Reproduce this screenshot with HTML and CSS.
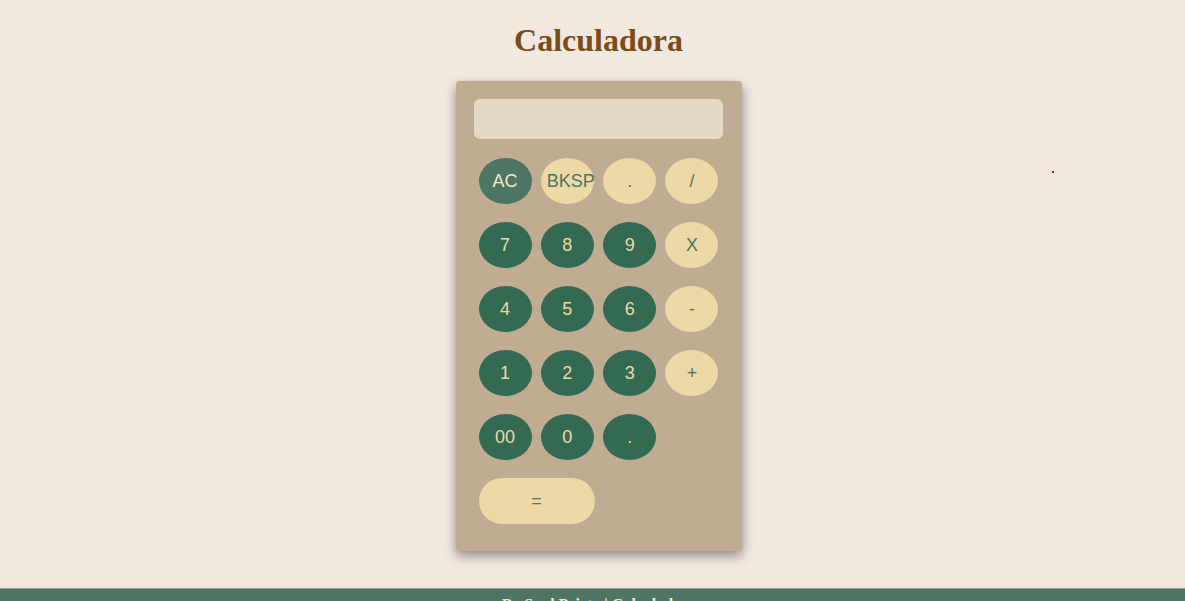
FILE: index.html
```html
<!DOCTYPE html>
<html lang="es">
<head>
<meta charset="utf-8">
<title>Calculadora</title>
<link rel="stylesheet" href="styles.css">
</head>
<body>
<main class="page">
  <h1 class="title">Calculadora</h1>
  <div class="calculator">
    <div class="display"></div>
    <div class="keys">
      <button class="key key-ac">AC</button>
      <button class="key key-op">BKSP</button>
      <button class="key key-op">.</button>
      <button class="key key-op">/</button>
      <button class="key key-num">7</button>
      <button class="key key-num">8</button>
      <button class="key key-num">9</button>
      <button class="key key-op">X</button>
      <button class="key key-num">4</button>
      <button class="key key-num">5</button>
      <button class="key key-num">6</button>
      <button class="key key-op">-</button>
      <button class="key key-num">1</button>
      <button class="key key-num">2</button>
      <button class="key key-num">3</button>
      <button class="key key-op">+</button>
      <button class="key key-num">00</button>
      <button class="key key-num">0</button>
      <button class="key key-num">.</button>
      <span class="key-empty"></span>
      <button class="key key-op key-wide">=</button>
    </div>
  </div>
  <span class="dot"></span>
</main>
<footer class="footer">By Saul Prieto | Calculadora</footer>
</body>
</html>
```

FILE: styles.css
```css
html, body {
  margin: 0;
  padding: 0;
}
body {
  background: #f1e8df;
  font-family: "Liberation Serif", "Times New Roman", serif;
  overflow: hidden;
}
.page {
  position: relative;
  padding: 0.5px 0 0 12px;
  display: flex;
  flex-direction: column;
  align-items: center;
}
.title {
  margin: 21px 0 22px;
  font-size: 32px;
  font-weight: bold;
  color: #7b4b1a;
  line-height: 37px;
}
.calculator {
  width: 286px;
  box-sizing: border-box;
  background: #bfac93;
  border-radius: 4px;
  padding: 18px 18px 27px 18px;
  box-shadow: 0 5px 12px rgba(0, 0, 0, 0.4);
}
.display {
  height: 40px;
  margin-right: 1px;
  background: #e5d9c3;
  border-radius: 6px;
}
.keys {
  margin: 19px 5px 0 5px;
  display: grid;
  grid-template-columns: repeat(4, 53px);
  justify-content: space-between;
  row-gap: 18px;
}
.key {
  width: 53px;
  height: 46px;
  border: none;
  border-radius: 50%;
  padding: 3px 6px 1px 6px;
  font-family: "Liberation Sans", Arial, sans-serif;
  font-size: 18px;
  white-space: nowrap;
  overflow: visible;
}
.key-num {
  background: #346a52;
  color: #ecd9a6;
}
.key-ac {
  background: #4d7563;
  color: #f1e6cc;
}
.key-op {
  background: #ecd9a6;
  color: #4e7563;
}
.key-wide {
  grid-column: span 2;
  width: 116px;
  border-radius: 23px;
}
.dot {
  position: absolute;
  left: 1052px;
  top: 171px;
  width: 2px;
  height: 2px;
  background: #b01010;
}
.footer {
  margin-top: 37px;
  background: #4e7563;
  color: #f1e6cc;
  font-weight: bold;
  font-size: 16px;
  text-align: center;
  padding: 7px 0 8px 13px;
  border-top: 1px solid #8ea596;
}
```
